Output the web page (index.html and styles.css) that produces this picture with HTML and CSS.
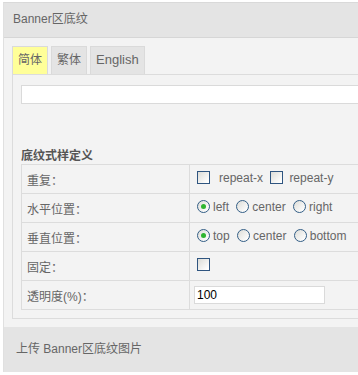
FILE: index.html
```html
<!DOCTYPE html>
<html lang="zh-CN">
<head>
    <meta charset="UTF-8">
    <title>Banner区底纹</title>
    <link rel="stylesheet" href="styles.css">
</head>
<body>
    <div class="panel">
        <div class="panel-header">Banner区底纹</div>
        <div class="panel-body">
            <ul class="tabs">
                <li class="tab active">简体</li>
                <li class="tab">繁体</li>
                <li class="tab">English</li>
            </ul>
            <div class="tab-content">
                <input type="text" class="name-input">

                <h4 class="section-title">底纹式样定义</h4>
                <table class="form-table">
                    <tr>
                        <td class="label">重复：</td>
                        <td>
                            <label class="opt"><span class="check"></span><span class="txt-wide">repeat-x</span></label>
                            <label class="opt"><span class="check"></span>repeat-y</label>
                        </td>
                    </tr>
                    <tr>
                        <td class="label">水平位置：</td>
                        <td>
                            <label class="opt"><span class="radio on"></span>left</label>
                            <label class="opt"><span class="radio"></span>center</label>
                            <label class="opt"><span class="radio"></span>right</label>
                        </td>
                    </tr>
                    <tr>
                        <td class="label">垂直位置：</td>
                        <td>
                            <label class="opt"><span class="radio on"></span>top</label>
                            <label class="opt"><span class="radio"></span>center</label>
                            <label class="opt"><span class="radio"></span>bottom</label>
                        </td>
                    </tr>
                    <tr>
                        <td class="label">固定：</td>
                        <td><label class="opt"><span class="check"></span></label></td>
                    </tr>
                    <tr>
                        <td class="label">透明度(%)：</td>
                        <td><input type="text" class="opacity-input" value="100"></td>
                    </tr>
                </table>
            </div>
        </div>
        <div class="panel-footer">上传 Banner区底纹图片</div>
    </div>
</body>
</html>
```

FILE: styles.css
```css
* {
    margin: 0;
    padding: 0;
    box-sizing: border-box;
}

body {
    font-family: 'Liberation Sans', 'Noto Sans CJK SC', sans-serif;
    font-size: 12px;
    color: #666;
    background: #fff;
    overflow: hidden;
}

.panel {
    width: 420px;
    margin: 2px 0 0 3px;
    border-left: 1px solid #e0e0e0;
    border-top: 1px solid #d9d9d9;
}

.panel-header {
    height: 35px;
    line-height: 33px;
    padding-left: 9px;
    background: #e4e4e4;
    border-bottom: 1px solid #d6d6d6;
    color: #666;
}

.panel-body {
    background: #f3f3f3;
    padding: 8px 0 8px 8px;
}

.tabs {
    list-style: none;
    display: flex;
    gap: 3px;
}

.tab {
    height: 28px;
    line-height: 26px;
    padding: 0 5px;
    background: #e4e4e4;
    border: 1px solid #dadada;
    border-bottom: none;
    color: #666;
}

.tab.active {
    background: #ffff99;
}

.tab:nth-child(3) {
    font-size: 13px;
}

.tab-content {
    border-left: 1px solid #dcdcdc;
    border-top: 1px solid #dcdcdc;
    border-bottom: 1px solid #dcdcdc;
    padding: 10px 0 8px 8px;
}

.name-input {
    display: block;
    width: 100%;
    height: 19px;
    border: 1px solid #dadada;
    background: #fff;
}

.section-title {
    margin-top: 45px;
    font-size: 12px;
    font-weight: bold;
    color: #555;
    line-height: 15px;
}

.form-table {
    width: 100%;
    border-collapse: collapse;
}

.form-table td {
    height: 29px;
    border: 1px solid #dcdcdc;
    color: #666;
    padding: 0 0 0 7px;
    vertical-align: middle;
}

.form-table td.label {
    width: 168px;
    padding-left: 5px;
}

.opt {
    display: inline-flex;
    align-items: center;
    margin-right: 4px;
    font-size: 12px;
}

.txt-wide {
    margin-left: 3px;
}

.check {
    display: inline-block;
    width: 13px;
    height: 13px;
    border: 1px solid #2f5580;
    background: linear-gradient(135deg, #dcdcd7 0%, #fff 90%);
    margin-right: 6px;
}

.radio {
    display: inline-block;
    width: 13px;
    height: 13px;
    border-radius: 50%;
    border: 1px solid #335e86;
    background: linear-gradient(135deg, #dcdcd7 0%, #fff 90%);
    margin-right: 3px;
    position: relative;
}

.radio.on::after {
    content: '';
    position: absolute;
    left: 3px;
    top: 3px;
    width: 5px;
    height: 5px;
    border-radius: 50%;
    background: #2fb52f;
}

.opacity-input {
    width: 131px;
    height: 18px;
    border: 1px solid #dadada;
    background: #fff;
    font-family: 'Liberation Sans', sans-serif;
    font-size: 12px;
    color: #000;
    padding-left: 2px;
    margin-left: -3px;
}

.panel-footer {
    height: 45px;
    line-height: 45px;
    padding-left: 12px;
    background: #e4e4e4;
    color: #666;
}
```
